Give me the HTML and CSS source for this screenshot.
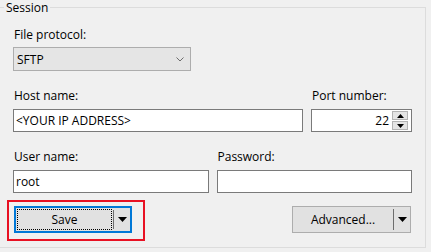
FILE: index.html
```html
<!DOCTYPE html>
<html lang="en">
<head>
    <meta charset="UTF-8">
    <meta name="viewport" content="width=device-width, initial-scale=1.0">
    <title>Session</title>
    <link rel="stylesheet" href="styles.css">
</head>
<body>
    <fieldset class="session">
        <legend>Session</legend>
        <div class="group-body">
            <label class="label first">File protocol:</label>
            <div class="combo">
                <span>SFTP</span>
                <svg width="8" height="5" viewBox="0 0 8 5"><polyline points="0.5,0.5 4,4 7.5,0.5" fill="none" stroke="#6d6d6d" stroke-width="1"/></svg>
            </div>

            <div class="row">
                <div class="field host">
                    <label class="label">Host name:</label>
                    <div class="edit">&lt;YOUR IP ADDRESS&gt;</div>
                </div>
                <div class="field port">
                    <label class="label">Port number:</label>
                    <div class="edit spin">
                        <span class="value">22</span>
                        <span class="spinner">
                            <span class="spin-btn"><svg width="7" height="4" viewBox="0 0 7 4"><polygon points="0,4 3.5,0 7,4" fill="#000"/></svg></span>
                            <span class="spin-btn"><svg width="7" height="4" viewBox="0 0 7 4"><polygon points="0,0 7,0 3.5,4" fill="#000"/></svg></span>
                        </span>
                    </div>
                </div>
            </div>

            <div class="row">
                <div class="field user">
                    <label class="label">User name:</label>
                    <div class="edit">root</div>
                </div>
                <div class="field pass">
                    <label class="label">Password:</label>
                    <div class="edit"></div>
                </div>
            </div>

            <div class="actions">
                <div class="highlight">
                    <div class="split default">
                        <span class="main"><span class="focus">Save</span></span>
                        <span class="drop"><svg width="9" height="5" viewBox="0 0 9 5"><polygon points="0,0 9,0 4.5,5" fill="#000"/></svg></span>
                    </div>
                </div>
                <div class="split advanced">
                    <span class="main">Advanced...</span>
                    <span class="drop"><svg width="9" height="5" viewBox="0 0 9 5"><polygon points="0,0 9,0 4.5,5" fill="#000"/></svg></span>
                </div>
            </div>
        </div>
    </fieldset>
</body>
</html>
```

FILE: styles.css
```css
* {
    box-sizing: border-box;
}
body {
    margin: 0;
    width: 431px;
    height: 252px;
    overflow: hidden;
    background: #f0f0f0;
    font-family: "Open Sans", "Segoe UI", sans-serif;
    font-size: 12px;
    line-height: 15px;
    color: #000;
}
.session {
    margin: 0 5px 0 -3px;
    padding: 0;
    min-width: 0;
    height: 248px;
    border: 1px solid #dcdcdc;
}
.session legend {
    margin-left: 6px;
    padding: 0 2px;
    line-height: 15px;
}
.group-body {
    padding: 0 13px 0 15px;
}
.label {
    display: block;
    padding-left: 1px;
    margin-top: 17px;
    margin-bottom: 6px;
}
.label.first {
    margin-top: 12px;
    margin-bottom: 5px;
}
.combo {
    width: 178px;
    height: 24px;
    display: flex;
    align-items: center;
    justify-content: space-between;
    padding: 0 6px 0 3px;
    background: #e5e5e5;
    border: 1px solid #adadad;
}
.row {
    display: flex;
    gap: 8px;
}
.host {
    flex: 0 0 290px;
}
.port {
    flex: 1;
}
.user, .pass {
    flex: 1;
}
.edit {
    height: 23px;
    display: flex;
    align-items: center;
    padding: 0 2px;
    background: #fff;
    border: 1px solid #7a7a7a;
}
.edit.spin {
    justify-content: flex-end;
    padding: 1px 3px 1px 2px;
}
.value {
    margin-right: 3px;
}
.spinner {
    width: 16px;
    height: 19px;
    display: flex;
    flex-direction: column;
    gap: 1px;
}
.spin-btn {
    flex: 1;
    display: flex;
    align-items: center;
    justify-content: center;
    background: #e5e5e5;
    border: 1px solid #b4b4b4;
}
.actions {
    display: flex;
    justify-content: space-between;
    align-items: flex-start;
    margin: 7px 1px 0 -6px;
}
.highlight {
    border: 2px solid #e81123;
    padding: 4px 11px 6px 5px;
}
.split {
    height: 27px;
    display: flex;
    background: #e1e1e1;
    border: 1px solid #adadad;
}
.split.default {
    width: 118px;
    border: 2px solid #0078d7;
}
.split.advanced {
    width: 119px;
    margin-top: 6px;
}
.main {
    flex: 1;
    display: flex;
    align-items: center;
    justify-content: center;
    padding: 1px;
}
.focus {
    flex: 1;
    align-self: stretch;
    display: flex;
    align-items: center;
    justify-content: center;
    border: 1px dotted #000;
}
.drop {
    width: 17px;
    margin: 2px 0;
    display: flex;
    align-items: center;
    justify-content: center;
    border-left: 1px solid #6d6d6d;
}
```
